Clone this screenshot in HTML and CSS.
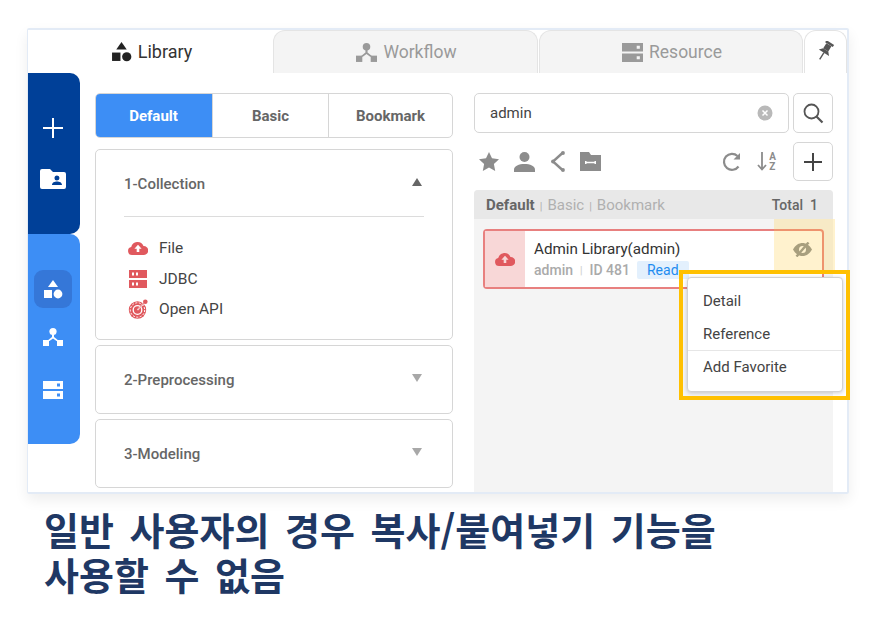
FILE: index.html
```html
<!DOCTYPE html>
<html lang="ko">
<head>
<meta charset="UTF-8">
<title>Library</title>
<link rel="stylesheet" href="styles.css">
</head>
<body>
  <svg class="defs" width="0" height="0">
    <symbol id="i-shapes" viewBox="0 0 20 20">
      <path d="M10 1l5 7H5z"/><rect x="1" y="11" width="8" height="8"/><circle cx="15" cy="15" r="4.4"/>
    </symbol>
    <symbol id="i-flow" viewBox="0 0 20 20">
      <circle cx="10" cy="4.5" r="3.6"/><path d="M9 7h2v3l5 4h-2.500L10 11.500 6.500 14H4l5-4z"/><rect x="0" y="13" width="6" height="6"/><rect x="14" y="13" width="6" height="6"/>
    </symbol>
    <symbol id="i-server" viewBox="0 0 20 20">
      <path fill-rule="evenodd" d="M0 1h20v8H0zM14 3.500v3h3v-3zM0 11h20v8H0zM14 13.500v3h3v-3z"/>
    </symbol>
    <symbol id="i-cloud" viewBox="0 0 20 14">
      <path fill-rule="evenodd" d="M4 14a4 4 0 0 1-.8-7.900A6.500 6.500 0 0 1 15.500 5 4.500 4.500 0 0 1 16 14zM10 3.800L6.400 7.800h2.300V11h2.600V7.800h2.300z"/>
    </symbol>
  </svg>

  <div class="frame">
    <div class="tabs">
      <div class="tab active tab-lib"><svg class="tab-icon"><use href="#i-shapes"/></svg>Library</div>
      <div class="tab tab-flow"><svg class="tab-icon"><use href="#i-flow"/></svg>Workflow</div>
      <div class="tab tab-res"><svg class="tab-icon"><use href="#i-server"/></svg>Resource</div>
      <div class="tab active tab-pin">
        <svg width="20" height="20" viewBox="0 0 20 20"><g transform="rotate(32 10 10)" fill="#555"><rect x="5.500" y="0" width="9" height="2.600"/><rect x="7" y="2.600" width="6" height="6"/><path d="M7 8.600h6l3 3.400H4z"/><rect x="9.300" y="12" width="1.400" height="8"/></g></svg>
      </div>
    </div>

    <div class="main">
      <div class="sidebar">
        <div class="side-top">
          <svg class="side-icon" viewBox="0 0 20 20"><path d="M9 0h2v9h9v2h-9v9H9v-9H0V9h9z"/></svg>
          <svg class="side-icon folder" viewBox="0 0 26 20"><path fill-rule="evenodd" d="M2 0h8l3 3h11a2 2 0 0 1 2 2v13a2 2 0 0 1-2 2H2a2 2 0 0 1-2-2V2a2 2 0 0 1 2-2zM17 6.500a2.500 2.500 0 1 0 0 5 2.500 2.500 0 0 0 0-5zM12 16h10c0-2.500-2.500-3.500-5-3.500s-5 1-5 3.500z"/></svg>
        </div>
        <div class="side-bottom">
          <div class="side-btn current"><svg class="side-icon"><use href="#i-shapes"/></svg></div>
          <div class="side-btn"><svg class="side-icon"><use href="#i-flow"/></svg></div>
          <div class="side-btn"><svg class="side-icon"><use href="#i-server"/></svg></div>
        </div>
      </div>

      <div class="left-col">
        <div class="seg">
          <div class="seg-item on">Default</div>
          <div class="seg-item seg-basic">Basic</div>
          <div class="seg-item seg-mark">Bookmark</div>
        </div>

        <div class="group open">
          <div class="group-head">
            <span>1-Collection</span>
            <i class="arrow up"></i>
          </div>
          <ul class="group-list">
            <li><svg class="li-icon"><use href="#i-cloud"/></svg>File</li>
            <li>
              <svg class="li-icon" viewBox="0 0 20 20"><path fill-rule="evenodd" d="M1 1h18v8H1zM4 3.500v3h2v-3zM8 3.500v3h2v-3zM1 11h18v8H1zM4 13.500v3h2v-3zM8 13.500v3h2v-3z"/></svg>JDBC
            </li>
            <li>
              <svg class="li-icon" viewBox="0 0 20 20"><circle cx="9.500" cy="11" r="8.700"/><circle cx="9.500" cy="11" r="7.200" fill="none" stroke="#fff" stroke-width="1" stroke-dasharray="2 1.500"/><circle cx="9.500" cy="11" r="4.300" fill="none" stroke="#fff" stroke-width="1.300"/><path d="M9.500 11L17 3" stroke="#fff" stroke-width="1.400"/><path d="M10 10.500L17 3" stroke="#e0595e" stroke-width=".7"/><circle cx="17.300" cy="2.700" r="2.300"/></svg>Open API
            </li>
          </ul>
        </div>

        <div class="group closed">
          <span>2-Preprocessing</span>
          <i class="arrow down"></i>
        </div>
        <div class="group closed">
          <span>3-Modeling</span>
          <i class="arrow down"></i>
        </div>
      </div>

      <div class="right-col">
        <div class="search-row">
          <div class="search-box">
            <span>admin</span>
            <svg width="16" height="16" viewBox="0 0 16 16"><circle cx="8" cy="8" r="7.500" fill="#b9b9b9"/><path d="M5.500 5.500l5 5M10.500 5.500l-5 5" stroke="#fff" stroke-width="1.500"/></svg>
          </div>
          <div class="square-btn">
            <svg width="22" height="22" viewBox="0 0 22 22" fill="none" stroke="#555" stroke-width="1.800"><circle cx="9.500" cy="9.500" r="7"/><path d="M14.500 14.500l6 6" stroke-width="2.200"/></svg>
          </div>
        </div>

        <div class="toolbar">
          <div class="tool-left">
            <svg width="20" height="19" viewBox="0 0 20 19"><path d="M10 0l3 6.300 7 .9-5.100 4.800 1.300 6.900L10 15.600 3.800 18.900 5.100 12 0 7.200l7-.9z" fill="#8c8c8c"/></svg>
            <svg width="21" height="20" viewBox="0 0 21 20" fill="#8c8c8c"><circle cx="10.500" cy="5" r="5"/><path d="M0 20v-2.500C0 14 5 12 10.500 12S21 14 21 17.500V20z"/></svg>
            <svg width="15" height="21" viewBox="0 0 15 21" fill="#8c8c8c"><path d="M13 1.500L3 10.500l10 9" fill="none" stroke="#8c8c8c" stroke-width="2.400"/><circle cx="13" cy="2" r="1.900"/><circle cx="13" cy="19" r="1.900"/><circle cx="3" cy="10.500" r="1.900"/></svg>
            <svg width="21" height="19" viewBox="0 0 21 19"><path fill-rule="evenodd" d="M0 0h9l2 3h10v16H0zM5 9v3h1.500v-.8h8v.8H16V9h-1.500v.8h-8V9z" fill="#8c8c8c"/></svg>
          </div>
          <div class="tool-right">
            <svg width="20" height="20" viewBox="0 0 20 20" fill="none" stroke="#8c8c8c" stroke-width="2.200"><path d="M16.500 14.500A8 8 0 1 1 15.500 4"/><path d="M18 1v6.500h-6.500z" fill="#8c8c8c" stroke="none"/></svg>
            <div class="sort-icon">
              <svg width="10" height="19" viewBox="0 0 10 19" fill="none" stroke="#8c8c8c" stroke-width="1.800"><path d="M5 0v17M1 13l4 4.500L9 13"/></svg>
              <div class="sort-az"><span>A</span><span>Z</span></div>
            </div>
            <div class="square-btn plus-btn">
              <svg width="18" height="18" viewBox="0 0 18 18"><path d="M8 0h2v8h8v2h-8v8H8v-8H0V8h8z" fill="#444"/></svg>
            </div>
          </div>
        </div>

        <div class="panel">
          <div class="panel-head">
            <div class="crumbs"><b>Default</b><em>|</em>Basic<em>|</em>Bookmark</div>
            <div class="total">Total&nbsp;&nbsp;1</div>
          </div>
          <div class="panel-body">
            <div class="card">
              <div class="card-icon"><svg class="card-cloud"><use href="#i-cloud"/></svg></div>
              <div class="card-text">
                <div class="card-title">Admin Library(admin)</div>
                <div class="card-meta">admin<em>|</em>ID 481<span class="badge">Read</span></div>
              </div>
            </div>
            <div class="eye-mark">
              <svg width="19" height="15" viewBox="0 0 19 15"><path fill-rule="evenodd" d="M0 7.500C2.500 3 6 1 9.500 1s7 2 9.500 6.500C16.500 12 13 14 9.500 14S2.500 12 0 7.500zM9.500 4a3.500 3.500 0 1 0 0 7 3.500 3.500 0 0 0 0-7z" fill="#a89f7e"/><path d="M3.500 14.500L15.500.5" stroke="#a89f7e" stroke-width="2.400"/></svg>
            </div>
          </div>
        </div>

        <div class="menu">
          <div class="menu-item">Detail</div>
          <div class="menu-item">Reference</div>
          <div class="menu-item sep">Add Favorite</div>
        </div>
        <div class="callout"></div>
      </div>
    </div>
  </div>

  <p class="caption">일반 사용자의 경우 복사/붙여넣기 기능을<br>사용할 수 없음</p>
</body>
</html>
```

FILE: styles.css
```css
* {
  box-sizing: border-box;
}

body {
  margin: 0;
  background: #fff;
  font-family: Roboto, "Noto Sans", sans-serif;
  color: #333;
}

.defs {
  position: absolute;
}

.frame {
  width: 822px;
  height: 466px;
  margin: 28px 0 0 27px;
  border: 2px solid #e3ebf6;
  border-left-width: 1px;
  border-radius: 2px;
  box-shadow: 0 6px 14px rgba(0, 0, 0, 0.07);
  display: flex;
  flex-direction: column;
}

/* tabs */
.tabs {
  display: flex;
  height: 43px;
  flex-shrink: 0;
  gap: 1px;
  background: #fff;
}

.tab {
  display: flex;
  align-items: center;
  justify-content: center;
  padding-left: 2px;
  font-size: 17.500px;
  color: #9a9a9a;
  background: #f4f4f4;
  border: 1px solid #e4e4e4;
  border-bottom: none;
  border-radius: 12px 12px 0 0;
}

.tab.active {
  background: #fff;
  color: #333;
  border-color: transparent;
}

.tab-lib {
  width: 244px;
  padding-left: 4px;
  padding-bottom: 2px;
  border-left: none;
  font-size: 18px;
}

.tab-flow {
  width: 265px;
}

.tab-res {
  width: 264px;
}

.tab-pin {
  width: 43px;
  padding: 0 2px 3px 0;
  border-color: #e4e4e4 !important;
  border-bottom: none;
}

.tab-icon {
  width: 21px;
  height: 21px;
  margin-right: 6px;
  fill: #9a9a9a;
}

.tab.active .tab-icon {
  fill: #222;
}

/* main area */
.main {
  position: relative;
  flex: 1;
  display: flex;
  align-items: flex-start;
}

.sidebar {
  width: 52px;
  height: 371px;
  flex-shrink: 0;
}

.side-top {
  height: 161px;
  background: #004098;
  border-radius: 0 10px 10px 0;
  padding: 45px 2px 0 0;
  display: flex;
  flex-direction: column;
  align-items: center;
  gap: 31px;
}

.side-bottom {
  height: 210px;
  background: #3d8ef5;
  border-radius: 0 10px 10px 0;
  padding: 36px 2px 0 0;
  display: flex;
  flex-direction: column;
  align-items: center;
}

.side-icon {
  width: 20px;
  height: 20px;
  fill: #fff;
  display: block;
}

.side-icon.folder {
  width: 26px;
}

.side-btn {
  width: 38px;
  height: 38px;
  display: flex;
  align-items: center;
  justify-content: center;
  border-radius: 9px;
  margin-bottom: 15px;
}

.side-btn.current {
  background: #3577d8;
  margin-bottom: 10px;
}

/* left column */
.left-col {
  width: 358px;
  margin: 20px 0 0 15px;
  display: flex;
  flex-direction: column;
}

.seg {
  display: flex;
  height: 45px;
  border: 1px solid #d6d6d6;
  border-radius: 5px;
  overflow: hidden;
}

.seg-item {
  display: flex;
  align-items: center;
  justify-content: center;
  font-size: 15px;
  font-weight: 700;
  color: #666;
  border-left: 1px solid #d6d6d6;
}

.seg-item.on {
  width: 117px;
  background: #3d8ef5;
  color: #fff;
  border-left: none;
  margin: -1px 0 -1px -1px;
}

.seg-basic {
  width: 116px;
}

.seg-mark {
  flex: 1;
}

.group {
  border: 1px solid #d6d6d6;
  border-radius: 5px;
  font-size: 15px;
  font-weight: 500;
  color: #666;
}

.group.open {
  height: 191px;
  margin-top: 11px;
  padding: 0 28px;
}

.group.closed {
  height: 69px;
  margin-top: 5px;
  padding: 0 30px 0 28px;
  display: flex;
  align-items: center;
  justify-content: space-between;
}

.group-head {
  height: 67px;
  padding: 2px 2px 0 0;
  display: flex;
  align-items: center;
  justify-content: space-between;
  border-bottom: 1px solid #dcdcdc;
}

.arrow {
  display: block;
  width: 0;
  height: 0;
  margin-top: -4px;
  border-left: 5px solid transparent;
  border-right: 5px solid transparent;
}

.arrow.up {
  border-bottom: 8px solid #666;
}

.arrow.down {
  border-top: 8px solid #a8a8a8;
}

.group-list {
  list-style: none;
  margin: 16px 0 0;
  padding: 0 0 0 4px;
}

.group-list li {
  height: 30.500px;
  display: flex;
  align-items: center;
  font-size: 15.500px;
  font-weight: 400;
  color: #444;
}

.li-icon {
  width: 20px;
  height: 20px;
  fill: #e0595e;
  margin-right: 11px;
}

/* right column */
.right-col {
  width: 359px;
  margin: 20px 0 0 21px;
  display: flex;
  flex-direction: column;
}

.search-row {
  display: flex;
  justify-content: space-between;
  height: 40px;
}

.search-box {
  width: 315px;
  border: 1px solid #d6d6d6;
  border-radius: 5px;
  padding: 0 15px;
  display: flex;
  align-items: center;
  justify-content: space-between;
  font-size: 15px;
  color: #444;
}

.square-btn {
  width: 40px;
  height: 40px;
  border: 1px solid #d6d6d6;
  border-radius: 5px;
  display: flex;
  align-items: center;
  justify-content: center;
}

.toolbar {
  height: 39px;
  margin-top: 9px;
  display: flex;
  align-items: center;
  justify-content: space-between;
}

.tool-left,
.tool-right {
  display: flex;
  align-items: center;
}

.tool-left {
  gap: 15px;
  padding-left: 5px;
}

.tool-right {
  gap: 15px;
}

.plus-btn {
  height: 39px;
  margin-left: 2px;
}

.sort-icon {
  display: flex;
  align-items: center;
  gap: 2px;
}

.sort-az {
  display: flex;
  flex-direction: column;
  font-size: 10px;
  font-weight: 700;
  line-height: 10px;
  color: #8c8c8c;
}

.panel {
  margin-top: 9px;
  height: 302px;
  background: #f4f4f4;
  border-radius: 4px 4px 0 0;
}

.panel-head {
  height: 29px;
  background: #e8e8e8;
  border-radius: 4px 4px 0 0;
  padding: 0 15px 0 12px;
  display: flex;
  align-items: center;
  justify-content: space-between;
  font-size: 15px;
  color: #b0b0b0;
}

.crumbs b {
  color: #666;
}

.crumbs em {
  font-style: normal;
  font-size: 11px;
  margin: 0 5px;
}

.total {
  font-size: 14px;
  font-weight: 500;
  color: #666;
}

.panel-body {
  position: relative;
  padding: 10px 9px;
}

.card {
  width: 341px;
  height: 60px;
  display: flex;
  background: #fff;
  border: 2px solid #e8807f;
  border-radius: 4px;
}

.card-icon {
  width: 40px;
  display: flex;
  align-items: center;
  justify-content: center;
  background: #f8d7d7;
}

.card-cloud {
  width: 20px;
  height: 14px;
  fill: #e0595e;
}

.card-text {
  padding: 9px 0 0 9px;
}

.card-title {
  font-size: 15.200px;
  color: #333;
  line-height: 19px;
}

.card-meta {
  margin-top: 2px;
  font-size: 14px;
  font-weight: 500;
  color: #aaa;
  display: flex;
  align-items: center;
}

.card-meta em {
  font-style: normal;
  font-size: 10px;
  margin: 0 7px;
  color: #ccc;
}

.badge {
  margin-left: 7px;
  padding: 0 10px;
  height: 18px;
  line-height: 18px;
  background: #e3f0fd;
  color: #1e8cf0;
  font-weight: 400;
  border-radius: 2px;
}

/* yellow marks laid over the card */
.eye-mark {
  position: absolute;
  top: 0;
  left: 300px;
  width: 61px;
  height: 51px;
  background: rgba(255, 205, 60, 0.25);
  display: flex;
  align-items: center;
  justify-content: center;
  padding: 9px 4px 0 0;
}

.menu {
  position: absolute;
  left: 659px;
  top: 204px;
  width: 156px;
  height: 115px;
  padding-top: 6px;
  background: #fff;
  border: 1px solid #d2d2d2;
  border-radius: 4px;
  box-shadow: 0 1px 4px rgba(0, 0, 0, 0.2);
  font-size: 15px;
  color: #444;
}

.menu-item {
  height: 33px;
  padding-left: 15px;
  display: flex;
  align-items: center;
}

.menu-item.sep {
  border-top: 1px solid #e6e6e6;
}

.callout {
  position: absolute;
  left: 651px;
  top: 197px;
  width: 171px;
  height: 130px;
  border: 4px solid #ffc000;
}

.caption {
  margin: 12px 0 0 44px;
  font-family: "Noto Sans CJK KR", sans-serif;
  font-size: 38px;
  font-weight: 700;
  line-height: 45px;
  word-spacing: 5px;
  color: #1f3864;
}
```
